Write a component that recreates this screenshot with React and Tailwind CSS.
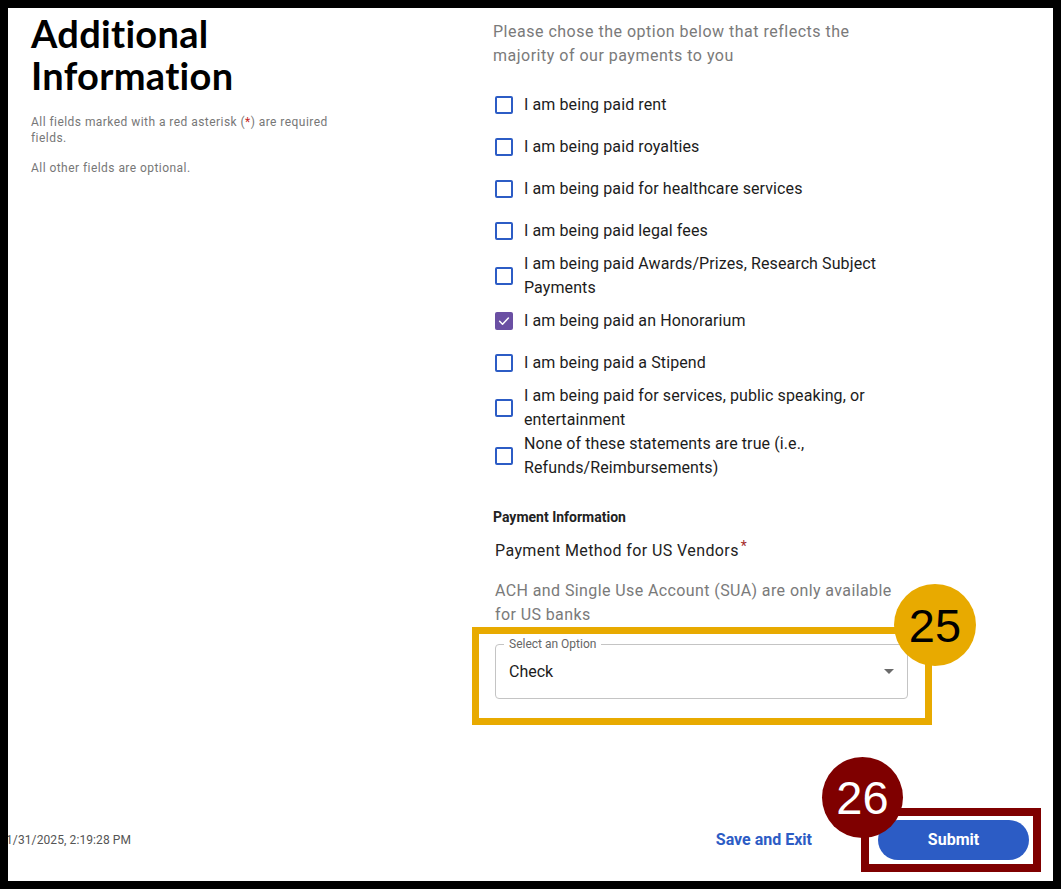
import { useState } from "react";

const options = [
  { label: "I am being paid rent" },
  { label: "I am being paid royalties" },
  { label: "I am being paid for healthcare services" },
  { label: "I am being paid legal fees" },
  { label: "I am being paid Awards/Prizes, Research Subject Payments" },
  { label: "I am being paid an Honorarium", checked: true },
  { label: "I am being paid a Stipend" },
  { label: "I am being paid for services, public speaking, or entertainment" },
  { label: "None of these statements are true (i.e., Refunds/Reimbursements)" },
];

function Box({ checked }) {
  if (checked) {
    return (
      <span className="w-[18px] h-[18px] rounded-[2px] bg-[#6a4fa3] flex items-center justify-center shrink-0">
        <svg width="14" height="14" viewBox="0 0 24 24" fill="none">
          <path d="M4.5 12.5l5 5L19.5 7" stroke="white" strokeWidth="2.6" strokeLinecap="round" strokeLinejoin="round" />
        </svg>
      </span>
    );
  }
  return <span className="w-[18px] h-[18px] rounded-[2px] border-2 border-[#2c5cc5] shrink-0" />;
}

export default function App() {
  const [values, setValues] = useState(options.map((o) => !!o.checked));

  return (
    <div className="w-[1061px] h-[889px] bg-black p-2" style={{ fontFamily: "Roboto, 'Liberation Sans', sans-serif" }}>
      <div className="bg-white w-full h-full flex flex-col overflow-hidden">
        {/* Main */}
        <div className="flex-1 flex">
          {/* Left column */}
          <div className="w-[485px] pl-[23px] pt-[4px]">
            <h1 className="text-[38px] leading-[42px] font-bold text-black tracking-[0.3px]" style={{ fontFamily: "Lato, 'Liberation Sans', sans-serif" }}>
              Additional
              <br />
              Information
            </h1>
            <p className="mt-[18px] max-w-[305px] text-[12px] leading-[16px] text-[#777] tracking-[0.45px]">
              All fields marked with a red asterisk (<span className="text-[#c62828]">*</span>) are required fields.
            </p>
            <p className="mt-[14px] text-[12px] leading-[16px] text-[#777] tracking-[0.45px]">All other fields are optional.</p>
          </div>

          {/* Right column */}
          <div className="w-[415px] pt-[12px]">
            <p className="text-[16px] leading-[24px] text-[#7a7a7a] tracking-[0.5px]">
              Please chose the option below that reflects the majority of our payments to you
            </p>
            <div className="mt-[16px] flex flex-col">
              {options.map((o, i) => (
                <label
                  key={i}
                  className="flex items-center min-h-[42px] cursor-pointer"
                  onClick={() => setValues(values.map((v, j) => (j === i ? !v : v)))}
                >
                  <span className="ml-[2px] mr-[11px] flex">
                    <Box checked={values[i]} />
                  </span>
                  <span className="text-[16px] leading-[24px] text-[#1c1c1c] max-w-[375px] tracking-[0.1px]">{o.label}</span>
                </label>
              ))}
            </div>

            <h3 className="mt-[27px] text-[14px] leading-[20px] font-bold text-[#222]">Payment Information</h3>
            <p className="mt-[12px] ml-[2px] text-[16px] leading-[24px] text-[#222] tracking-[0.4px]">
              Payment Method for US Vendors
              <span className="relative top-[-5px] ml-[2px] text-[#a52a2a] text-[14px]">*</span>
            </p>
            <p className="mt-[16px] ml-[2px] text-[16px] leading-[24px] text-[#7a7a7a] tracking-[0.4px]">
              ACH and Single Use Account (SUA) are only available for US banks
            </p>

            {/* Select */}
            <div className="relative mt-[17px] ml-[2px] w-[413px] h-[55px] border border-[#c4c4c4] rounded-[4px] flex items-center px-[13px]">
              <span className="absolute left-[8px] top-[-8px] bg-white px-[5px] text-[12px] leading-[14px] text-[#666]">Select an Option</span>
              <span className="flex-1 text-[16px] text-[#1c1c1c]">Check</span>
              <svg width="10" height="5" viewBox="0 0 10 5">
                <path d="M0 0L5 5L10 0Z" fill="#6b6b6b" />
              </svg>
              {/* annotation 25 */}
              <div className="absolute left-[-24px] right-[-25px] top-[-18px] bottom-[-27px] border-[7px] border-[#e8aa00] pointer-events-none" />
              <div className="absolute left-[398px] top-[-61px] w-[82px] h-[82px] rounded-full bg-[#e8aa00] flex items-center justify-center">
                <span className="text-[47px] text-black leading-none" style={{ fontFamily: "'Liberation Sans', Arial, sans-serif" }}>25</span>
              </div>
            </div>
          </div>
        </div>

        {/* Footer */}
        <div className="flex items-center h-[40px] mb-[21px] pr-[24px]">
          <span className="-ml-[2px] text-[12px] text-[#555] tracking-[0.1px] flex-1">1/31/2025, 2:19:28 PM</span>
          <button className="text-[16px] font-bold text-[#2c5cc5] mr-[66px]">Save and Exit</button>
          <div className="relative">
            <button className="w-[151px] h-[40px] rounded-full bg-[#2c5cc5] text-white text-[16px] font-bold">Submit</button>
            {/* annotation 26 */}
            <div className="absolute left-[-17px] right-[-12px] top-[-12px] bottom-[-12px] border-[8px] border-[#7f0000] pointer-events-none" />
            <div className="absolute left-[-56px] top-[-63px] w-[81px] h-[81px] rounded-full bg-[#7f0000] flex items-center justify-center">
              <span className="text-[47px] text-white leading-none" style={{ fontFamily: "'Liberation Sans', Arial, sans-serif" }}>26</span>
            </div>
          </div>
        </div>
      </div>
    </div>
  );
}
